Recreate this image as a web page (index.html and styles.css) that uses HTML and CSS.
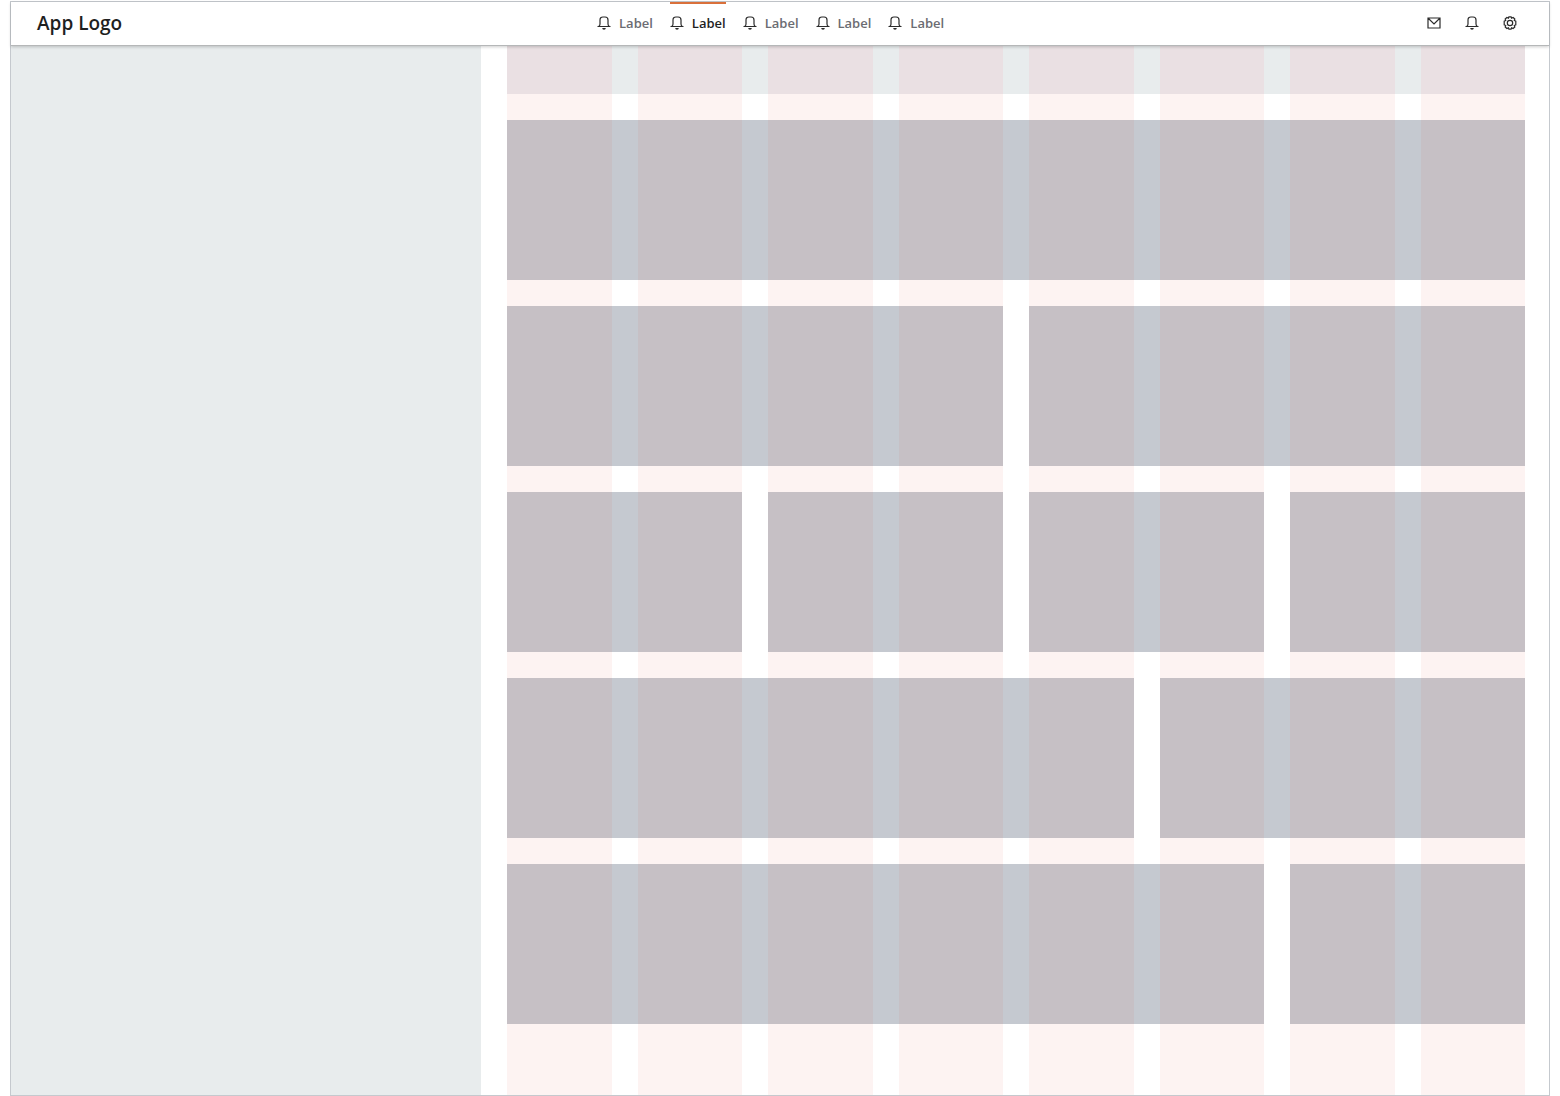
FILE: index.html
```html
<!DOCTYPE html>
<html lang="en">
<head>
<meta charset="utf-8">
<title>App Logo</title>
<link rel="stylesheet" href="styles.css">
</head>
<body>
<svg class="symbols" aria-hidden="true">
  <symbol id="bell" viewBox="0 0 14 14"><path d="M.5 10.500h13M1.600 10.500C2.700 9.900 3 9.200 3 8V3.900C3 2 4.100 1 5.900 1h2.200C9.900 1 11 2 11 3.900V8c0 1.200.3 1.900 1.400 2.500"/><path class="dot" d="M5.200 12h3.600a1.800 1.800 0 0 1-3.600 0z"/></symbol>
  <symbol id="mail" viewBox="0 0 14 14"><path d="M1 2h12v10H1zM1.200 2.300L7 8l5.800-5.700"/></symbol>
  <symbol id="gear" viewBox="0 0 14 14"><path d="M5.900.8h2.200l.5 1.300 1.500-.6 1.700 1.500-.5 1.500 1.500.6v3.800l-1.500.6.5 1.500-1.700 1.500-1.500-.6-.5 1.300H5.900l-.5-1.300-1.500.6L2.200 11l.5-1.500-1.500-.6V5.100l1.500-.6L2.200 3l1.700-1.500 1.500.6z"/><circle cx="7" cy="7" r="2.700"/></symbol>
</svg>
<div class="app">
  <header class="header">
    <span class="logo">App Logo</span>
    <nav class="nav">
      <a class="nav-item" href="#"><svg class="icon"><use href="#bell"/></svg>Label</a>
      <a class="nav-item active" href="#" aria-current="page"><svg class="icon"><use href="#bell"/></svg>Label</a>
      <a class="nav-item" href="#"><svg class="icon"><use href="#bell"/></svg>Label</a>
      <a class="nav-item" href="#"><svg class="icon"><use href="#bell"/></svg>Label</a>
      <a class="nav-item" href="#"><svg class="icon"><use href="#bell"/></svg>Label</a>
    </nav>
    <div class="actions">
      <button class="action" type="button" aria-label="Messages"><svg class="icon"><use href="#mail"/></svg></button>
      <button class="action" type="button" aria-label="Notifications"><svg class="icon"><use href="#bell"/></svg></button>
      <button class="action" type="button" aria-label="Settings"><svg class="icon"><use href="#gear"/></svg></button>
    </div>
  </header>
  <div class="body">
    <aside class="sidebar"></aside>
    <main class="content">
      <div class="blocks">
        <div class="title-bar"><i></i><i></i><i></i><i></i><i></i><i></i><i></i><i></i></div>
        <section class="block span-8"></section>
        <section class="block span-4"></section>
        <section class="block span-4"></section>
        <section class="block span-2"></section>
        <section class="block span-2"></section>
        <section class="block span-2"></section>
        <section class="block span-2"></section>
        <section class="block span-5"></section>
        <section class="block span-3"></section>
        <section class="block span-6"></section>
        <section class="block span-2"></section>
      </div>
      <div class="columns" aria-hidden="true"><i></i><i></i><i></i><i></i><i></i><i></i><i></i><i></i></div>
    </main>
  </div>
</div>
</body>
</html>
```
FILE: styles.css
```css
* { box-sizing: border-box; }

body {
  margin: 0;
  padding: 1px 10px 0;
  background: #fff;
  color: #1f1f1f;
  font-family: "Open Sans", "Noto Sans", sans-serif;
}

.symbols { position: absolute; width: 0; height: 0; }

.app {
  display: flex;
  flex-direction: column;
  min-height: calc(100vh - 1px);
  border: 1px solid #c5c9ce;
}

.header {
  position: relative;
  z-index: 2;
  display: flex;
  justify-content: space-between;
  height: 44px;
  padding: 0 24px 0 26px;
  background: #fff;
  border-bottom: 1px solid #b5b7b8;
  box-shadow: 0 1px 3px rgba(0, 0, 0, 0.2);
}

.logo {
  font-size: 19px;
  font-weight: 600;
  line-height: 43px;
}

.nav { display: flex; gap: 17px; }

.nav-item {
  display: flex;
  align-items: center;
  gap: 8px;
  border-top: 2px solid transparent;
  padding-bottom: 4px;
  color: #6b6c72;
  font-size: 13px;
  font-weight: 600;
  text-decoration: none;
}

.nav-item.active {
  border-top-color: #d9703a;
  color: #1f1f1f;
}

.icon {
  width: 14px;
  height: 14px;
  fill: none;
  stroke: #2b2b2b;
  stroke-width: 1.2;
}

.dot { fill: #2b2b2b; stroke: none; }

.actions { display: flex; gap: 8px; }

.action {
  display: flex;
  align-items: center;
  justify-content: center;
  width: 30px;
  padding: 0 0 2px;
  border: 0;
  background: none;
}

.body {
  display: grid;
  grid-template-columns: 470fr 1068fr;
  flex: 1;
}

.sidebar { background: #e8eced; }

.content {
  display: grid;
  padding: 0 24px 0 26px;
}

.columns,
.blocks { grid-area: 1 / 1; }

.columns,
.blocks,
.title-bar {
  display: grid;
  grid-template-columns: repeat(8, 1fr);
  column-gap: 26px;
}

.columns { pointer-events: none; }

.columns i { background: rgba(222, 50, 36, 0.06); }

.blocks {
  grid-template-rows: 48px;
  grid-auto-rows: 160px;
  row-gap: 26px;
  align-content: start;
  padding-bottom: 70px;
}

.title-bar {
  z-index: 1;
  grid-column: span 8;
  background: #e8eced;
}

.title-bar i { background: #eae0e3; }

.blocks { isolation: auto; }

.block { background: #c5c9d0; }

.span-2 { grid-column: span 2; }
.span-3 { grid-column: span 3; }
.span-4 { grid-column: span 4; }
.span-5 { grid-column: span 5; }
.span-6 { grid-column: span 6; }
.span-8 { grid-column: span 8; }
```
